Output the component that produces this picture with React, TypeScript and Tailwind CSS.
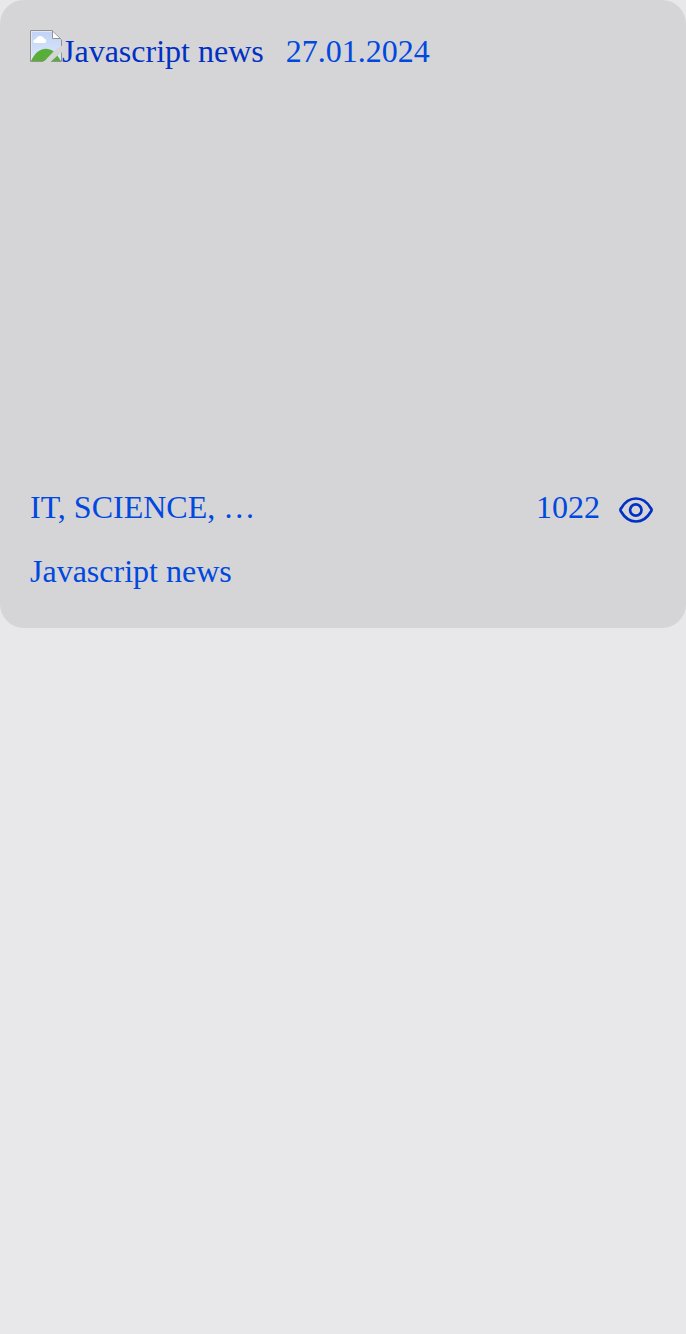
export default function App() {
  return (
    <main className="min-h-[1334px] bg-[#e8e8ea] font-['Liberation_Serif',serif] text-[32px] leading-9 text-[#0048e0]">
      <article className="flex h-[628px] flex-col rounded-[24px] bg-[#d5d5d7] px-[30px] pt-[30px]">
        <header className="flex h-[456px] items-start">
          <svg className="size-8 shrink-0" viewBox="0 0 32 32" aria-hidden="true">
            <defs>
              <linearGradient id="sky" x1="0" y1="0" x2="0" y2="1">
                <stop offset="0" stopColor="#c1d3f7" />
                <stop offset="1" stopColor="#dce8fa" />
              </linearGradient>
            </defs>
            <path d="M0 0H22L32 9.5V32H0Z" fill="#e1e9f8" />
            <path d="M2 2H22V9H31V31H2Z" fill="url(#sky)" />
            <path d="M5.5 13C2 13 3 9 6 9C7 5 13 5 14 8.5C17 9 17 13 14.5 13Z" fill="#fff" />
            <path d="M1 31C7 17 20 15 27 25L31 31Z" fill="#59ae39" />
            <path d="M13.5 32L25 20L32 15.5V21.5L20.5 32Z" fill="#d5d5d7" />
            <path d="M22 0V9H32Z" fill="#fff" />
            <path d="M.5 31.5V.5H22L31.5 9.5V16M22.5 .5V8.5H31M31.5 22.5V31.5H21M.5 31.5H13.5" fill="none" stroke="#929292" />
          </svg>
          <span className="mt-[3px] text-[#0031c4]">Javascript news</span>
          <time className="ml-[22px] mt-[3px]">27.01.2024</time>
        </header>
        <div className="flex h-16 items-start justify-between pt-[3px]">
          <span>IT, SCIENCE, …</span>
          <div className="mr-[2px] flex">
            <span>1022</span>
            <svg className="ml-[18px] mt-[3px] h-8 w-9" viewBox="0 0 36 32" fill="none" stroke="#0031c4" strokeWidth="2.7" strokeLinejoin="round" aria-hidden="true">
              <path d="M3.2 19.8C2.2 18.6 2.2 17.4 3.2 16.2C6.5 10.5 11.5 6.5 18 6.5C24.5 6.5 29.5 10.5 32.8 16.2C33.8 17.4 33.8 18.6 32.8 19.8C29.5 25.5 24.5 29.5 18 29.5C11.5 29.5 6.5 25.5 3.2 19.8Z" />
              <circle cx="17.8" cy="18" r="5.7" />
            </svg>
          </div>
        </div>
        <h2 className="pt-[3px]">Javascript news</h2>
      </article>
    </main>
  );
}
